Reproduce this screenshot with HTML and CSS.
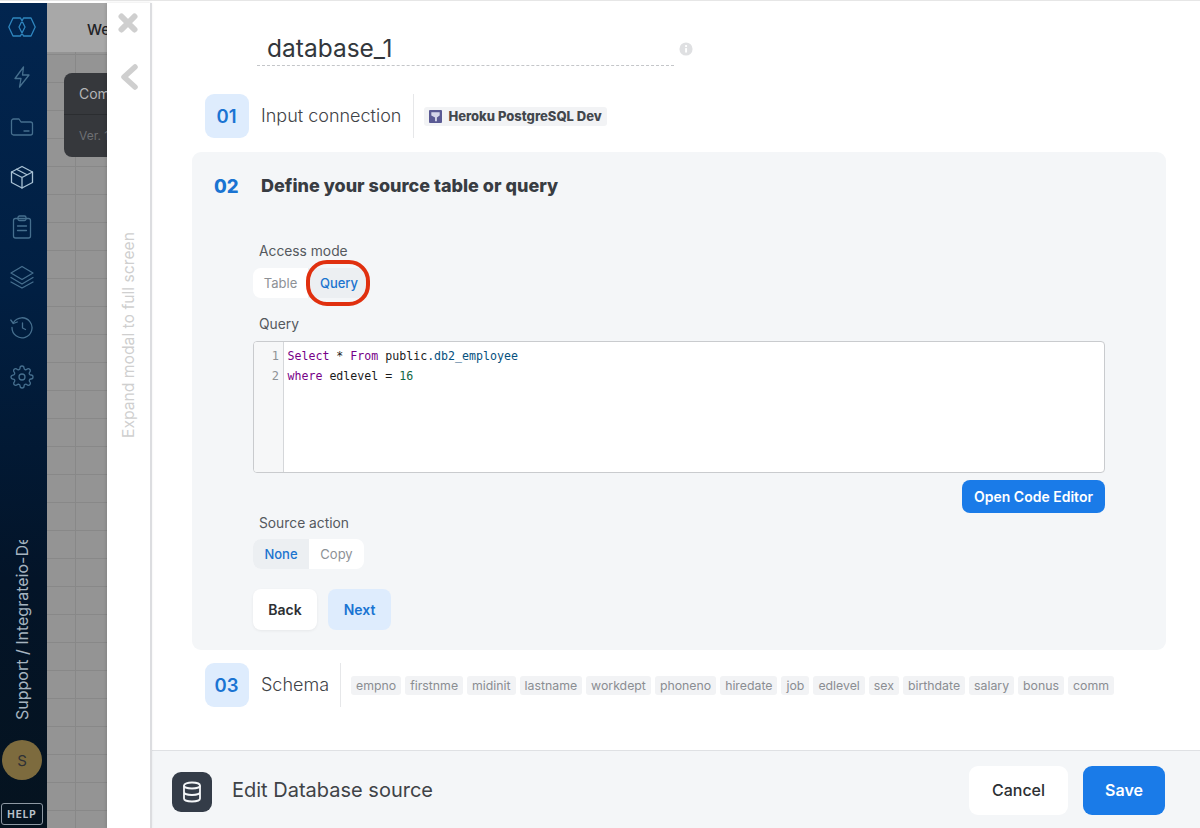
FILE: index.html
```html
<!DOCTYPE html>
<html lang="en">
<head>
<meta charset="utf-8">
<title>Edit Database source</title>
<link rel="stylesheet" href="styles.css">
</head>
<body>
<div class="app">
  <nav class="sidebar">
    <div class="nav-icons">
      <svg class="nav-icon logo" viewBox="0 0 28 20"><path d="M5 1h7.500l4.500 9-4.500 9H5L.8 10zM15.500 1H23l4.200 9-4.200 9h-7.500L11 10z"/></svg>
      <svg class="nav-icon" viewBox="0 0 24 24"><path d="M13.500 2 5 13.500h6L9.500 22 19 10h-6.500z"/></svg>
      <svg class="nav-icon" viewBox="0 0 24 24"><path d="M1.500 6a2 2 0 0 1 2-2h5.500l2 3h9.500a2 2 0 0 1 2 2v9a2 2 0 0 1-2 2h-17a2 2 0 0 1-2-2z"/><path d="M14 16h5"/></svg>
      <svg class="nav-icon bright" viewBox="0 0 24 24"><path d="M12 1.500 22.500 7v10.500L12 23 1.500 17.500V7z"/><path d="M1.500 7 12 12.500 22.500 7M12 12.500V23M6.500 4.200l10.500 5.600"/></svg>
      <svg class="nav-icon" viewBox="0 0 24 24"><rect x="3.500" y="3.500" width="17" height="19.500" rx="2"/><rect x="8" y="1" width="8" height="4.500" rx="1.500"/><path d="M7.500 11h9M7.500 15.500h9"/></svg>
      <svg class="nav-icon" viewBox="0 0 24 24"><path d="M12 1.500 23 8l-11 6.500L1 8z"/><path d="M1 12.500l11 6.500 11-6.500M1 17l11 6 11-6"/></svg>
      <svg class="nav-icon" viewBox="0 0 24 24"><path d="M3.500 7.500A10 10 0 1 1 2 12.500"/><path d="M.8 5l2.500 3.500 4-1.500M12.500 8v5l3 1.500"/></svg>
      <svg class="nav-icon" viewBox="0 0 24 24"><circle cx="12" cy="12" r="3"/><path d="M19.400 15a1.650 1.650 0 0 0 .33 1.820l.06.06a2 2 0 0 1 0 2.830 2 2 0 0 1-2.830 0l-.06-.06a1.650 1.650 0 0 0-1.820-.33 1.650 1.650 0 0 0-1 1.510V21a2 2 0 0 1-2 2 2 2 0 0 1-2-2v-.09A1.650 1.650 0 0 0 9 19.400a1.650 1.650 0 0 0-1.820.33l-.06.06a2 2 0 0 1-2.830 0 2 2 0 0 1 0-2.830l.06-.06a1.650 1.650 0 0 0 .33-1.820 1.650 1.650 0 0 0-1.510-1H3a2 2 0 0 1-2-2 2 2 0 0 1 2-2h.09A1.650 1.650 0 0 0 4.600 9a1.650 1.650 0 0 0-.33-1.820l-.06-.06a2 2 0 0 1 0-2.830 2 2 0 0 1 2.830 0l.06.06a1.650 1.650 0 0 0 1.820.33H9a1.650 1.650 0 0 0 1-1.510V3a2 2 0 0 1 2-2 2 2 0 0 1 2 2v.09a1.650 1.650 0 0 0 1 1.510 1.650 1.650 0 0 0 1.820-.33l.06-.06a2 2 0 0 1 2.830 0 2 2 0 0 1 0 2.830l-.06.06a1.650 1.650 0 0 0-.33 1.820V9a1.650 1.650 0 0 0 1.510 1H21a2 2 0 0 1 2 2 2 2 0 0 1-2 2h-.09a1.650 1.650 0 0 0-1.510 1z"/></svg>
    </div>
    <div class="org-name">Support / Integrateio-De</div>
    <div class="avatar">S</div>
    <div class="help">HELP</div>
  </nav>

  <div class="canvas">
    <div class="canvas-bar"><span class="canvas-bar-text">Welcome</span></div>
    <div class="canvas-card">
      <div class="canvas-card-head">Component</div>
      <div class="canvas-card-foot">Ver. 1</div>
    </div>
  </div>

  <aside class="modal-strip">
    <svg class="strip-close" viewBox="0 0 20 20"><path d="M3.500 3.500 16.500 16.500M16.500 3.500 3.500 16.500"/></svg>
    <svg class="strip-back" viewBox="0 0 20 26"><path d="M16 3 5 13l11 10"/></svg>
    <div class="strip-text">Expand modal to full screen</div>
  </aside>

  <main class="modal">
    <div class="modal-body">
      <div class="title-row">
        <div class="title-input">database_1</div>
        <svg class="info-icon" viewBox="0 0 16 16"><circle cx="8" cy="8" r="7.500" class="info-bg"/><rect x="7" y="7" width="2.200" height="5" class="info-fg"/><rect x="7" y="3.500" width="2.200" height="2.200" class="info-fg"/></svg>
      </div>

      <section class="step">
        <div class="step-num">01</div>
        <div class="step-label">Input connection</div>
        <div class="step-divider step-divider-first"></div>
        <div class="conn-chip">
          <svg class="conn-icon" viewBox="0 0 14 14"><rect width="14" height="14" rx="1" class="conn-bg"/><path d="M2.500 2.500h9v3.500L8.500 8v4H6.500V8L2.500 6z" class="conn-fg"/></svg>
          <span>Heroku PostgreSQL Dev</span>
        </div>
      </section>

      <section class="panel">
        <div class="panel-head">
          <span class="panel-num">02</span>
          <span class="panel-title">Define your source table or query</span>
        </div>
        <div class="panel-content">
          <div class="field-label access-label">Access mode</div>
          <div class="toggle">
            <span class="toggle-opt toggle-table">Table</span>
            <span class="toggle-opt toggle-query is-active">Query<span class="highlight-ring"></span></span>
          </div>
          <div class="field-label query-label">Query</div>
          <div class="editor">
            <div class="gutter"><div>1</div><div>2</div></div>
            <div class="code">
              <div class="code-line"><span class="kw">Select</span> * <span class="kw">From</span> public<span class="prop">.db2_employee</span></div>
              <div class="code-line"><span class="kw">where</span> edlevel = <span class="num">16</span></div>
            </div>
          </div>
          <div class="editor-actions"><button class="btn-code">Open Code Editor</button></div>
          <div class="field-label source-label">Source action</div>
          <div class="toggle">
            <span class="toggle-opt toggle-none is-active">None</span>
            <span class="toggle-opt toggle-copy">Copy</span>
          </div>
          <div class="panel-actions">
            <button class="btn btn-back">Back</button>
            <button class="btn btn-next">Next</button>
          </div>
        </div>
      </section>

      <section class="step step-schema">
        <div class="step-num">03</div>
        <div class="step-label">Schema</div>
        <div class="step-divider step-divider-schema"></div>
        <div class="chips">
          <span class="chip">empno</span><span class="chip">firstnme</span><span class="chip">midinit</span><span class="chip">lastname</span><span class="chip">workdept</span><span class="chip">phoneno</span><span class="chip">hiredate</span><span class="chip">job</span><span class="chip">edlevel</span><span class="chip">sex</span><span class="chip">birthdate</span><span class="chip">salary</span><span class="chip">bonus</span><span class="chip">comm</span>
        </div>
      </section>
    </div>

    <footer class="modal-footer">
      <div class="footer-icon">
        <svg viewBox="0 0 24 24"><ellipse cx="12" cy="5.500" rx="8" ry="3"/><path d="M4 5.500v13c0 1.700 3.600 3 8 3s8-1.300 8-3v-13M4 12c0 1.700 3.600 3 8 3s8-1.300 8-3"/></svg>
      </div>
      <div class="footer-title">Edit Database source</div>
      <button class="btn-footer btn-cancel">Cancel</button>
      <button class="btn-footer btn-save">Save</button>
    </footer>
  </main>
</div>
</body>
</html>
```
FILE: styles.css
```css
* { box-sizing: border-box; }
html, body { margin: 0; height: 100%; overflow: hidden; background: #fff; }
body { font-family: Inter, "Liberation Sans", sans-serif; color: #3b3f45; }
button { font-family: inherit; border: 0; cursor: pointer; padding: 0; }

.app { display: flex; width: 1200px; height: 828px; padding-top: 2px; border-top: 1px solid #e6e6e6; }

/* Sidebar */
.sidebar { width: 47px; flex: none; display: flex; flex-direction: column; align-items: center; padding-right: 3px; background: linear-gradient(180deg, #02254f 0%, #011f42 35%, #031428 70%, #05131f 100%); }
.nav-icons { display: flex; flex-direction: column; align-items: center; gap: 26px; padding-top: 12px; }
.nav-icon { width: 24px; height: 24px; fill: none; stroke: #466f8e; stroke-width: 1.300; stroke-linejoin: round; stroke-linecap: round; }
.nav-icon.logo { width: 28px; stroke: #2f86bf; }
.nav-icon.bright { stroke: #a9c2d4; }
.org-name { margin-top: auto; writing-mode: vertical-rl; transform: rotate(180deg); height: 180px; font-size: 16px; line-height: 20px; color: #a6b4c0; white-space: nowrap; overflow: hidden; }
.avatar { width: 40px; height: 40px; margin-top: 20px; border-radius: 50%; background: #7d6b3e; color: #2f3136; font-size: 15px; display: flex; align-items: center; justify-content: center; }
.help { width: 42px; height: 22px; margin: 23px 0 3px; border: 1px solid #8d98a3; border-radius: 3px; color: #b9c2ca; font-size: 10px; font-weight: 700; letter-spacing: 1px; display: flex; align-items: center; justify-content: center; }

/* Dimmed canvas */
.canvas { position: relative; width: 60px; flex: none; overflow: hidden; background-color: #949494; background-image: linear-gradient(#888 1px, transparent 1px), linear-gradient(90deg, #888 1px, transparent 1px); background-size: 28px 28px, 56px 28px; background-position: 0 23px, 28px 0; }
.canvas-bar { height: 49px; padding: 16px 0 0 40px; background: #a8a8a8; overflow: hidden; }
.canvas-bar-text { font-size: 15px; font-weight: 500; color: #1f2226; white-space: nowrap; }
.canvas-card { position: absolute; left: 17px; top: 70px; width: 120px; height: 84px; border-radius: 8px; background: #36383c; }
.canvas-card-head { height: 42px; padding: 12px 15px; font-size: 14px; color: #b4b5b7; border-bottom: 1px solid #2b2d30; white-space: nowrap; }
.canvas-card-foot { padding: 13px 15px; font-size: 12px; color: #6d6f73; }

/* Modal strip */
.modal-strip { position: relative; width: 45px; flex: none; background: #fff; border-right: 2px solid #dcdde0; display: flex; flex-direction: column; align-items: center; box-shadow: -1px 0 3px rgba(0, 0, 0, .12); }
.strip-close { width: 20px; height: 20px; margin-top: 10px; margin-right: 1px; fill: none; stroke: #cfcfcf; stroke-width: 6; stroke-linecap: round; }
.strip-back { width: 20px; height: 26px; margin-top: 31px; fill: none; stroke: #cfcfcf; stroke-width: 5.500; stroke-linecap: round; stroke-linejoin: round; }
.strip-text { margin-top: 142px; height: 206px; writing-mode: vertical-rl; transform: rotate(180deg); font-size: 15.700px; line-height: 18px; color: #cfcfcf; white-space: nowrap; }

/* Modal main */
.modal { flex: 1; min-width: 0; display: flex; flex-direction: column; background: #fff; }
.modal-body { flex: 1; min-height: 0; padding-left: 40px; }

.title-row { display: flex; align-items: flex-start; height: 91px; padding: 29px 0 0 65px; }
.title-input { width: 417px; height: 34px; padding: 0 0 0 10px; font-size: 24.500px; line-height: 32px; font-weight: 400; color: #33373c; border-bottom: 1px dashed #c4c6c9; }
.info-icon { width: 14px; height: 14px; margin: 10px 0 0 5px; }
.info-bg { fill: #dfe0e2; }
.info-fg { fill: #fff; }

.step { display: flex; align-items: center; height: 44px; padding-left: 13px; }
.step-num { width: 44px; height: 44px; flex: none; border-radius: 9px; background: #deecfd; color: #1a74d2; font-size: 18.500px; font-weight: 600; display: flex; align-items: center; justify-content: center; padding-right: 1px; }
.step-label { margin-left: 12px; font-size: 18px; line-height: 43px; height: 44px; font-weight: 300; color: #3f4347; white-space: nowrap; }
.step-divider { width: 1px; height: 44px; background: #e6e7e9; flex: none; }
.step-divider-first { margin-left: 12px; }
.conn-chip { display: flex; align-items: center; gap: 6px; height: 19px; margin-left: 10px; padding: 0 5px; border-radius: 3px; background: #f2f3f5; font-size: 13px; font-weight: 800; color: #43474d; white-space: nowrap; }
.conn-icon { width: 13px; height: 13px; }
.conn-bg { fill: #5a5a94; }
.conn-fg { fill: #d5d6ea; }

.panel { margin-top: 14px; width: 974px; height: 498px; border-radius: 9px; background: #f4f6f8; }
.panel-head { display: flex; align-items: center; height: 67px; padding-left: 22px; }
.panel-num { width: 47px; font-size: 18.500px; font-weight: 800; color: #1a74d2; }
.panel-title { font-size: 18px; font-weight: 800; color: #383c42; }
.panel-content { padding: 24px 61px 0; }

.field-label { font-size: 13.800px; line-height: 17px; color: #55595e; padding-left: 6px; white-space: nowrap; }
.toggle { display: inline-flex; vertical-align: top; height: 30px; border-radius: 8px; background: #fff; font-size: 13px; }
.toggle-opt { position: relative; display: flex; align-items: center; justify-content: center; color: #8d9196; }
.toggle-opt.is-active { background: #eceff2; color: #1b74cf; font-weight: 500; }
.toggle-table { width: 55px; }
.toggle-query { width: 60px; padding-left: 2px; border-radius: 0 8px 8px 0; }
.toggle-none { width: 56px; border-radius: 8px 0 0 8px; }
.toggle-copy { width: 55px; }
.access-label { height: 25px; }
.highlight-ring { position: absolute; left: -2px; top: -8px; width: 64px; height: 46px; border: 4.500px solid #e0300f; border-radius: 21px; }
.query-label { margin-top: 18px; height: 25px; }
.source-label { margin-top: 2px; height: 24px; }

.editor { display: flex; width: 852px; height: 132px; border: 1px solid #c9cbce; border-radius: 4px; background: #fff; font-family: "DejaVu Sans Mono", monospace; font-size: 12px; line-height: 20px; overflow: hidden; }
.gutter { width: 30px; flex: none; padding: 4px 4px 0 0; background: #f6f7f8; border-right: 1px solid #d5d7da; color: #8f9296; text-align: right; }
.code { padding: 4px 0 0 3.500px; color: #1a1a1a; font-size: 11.600px; }
.code-line { white-space: pre; }
.kw { color: #770088; }
.prop { color: #05507e; }
.num { color: #116644; }

.editor-actions { display: flex; justify-content: flex-end; width: 852px; margin-top: 7px; height: 33px; }
.btn-code { width: 143px; height: 33px; border-radius: 8px; background: #1a7be8; color: #fff; font-size: 14px; font-weight: 600; }
.panel-actions { display: flex; gap: 11px; margin-top: 20px; }
.btn { height: 41px; border-radius: 8px; font-size: 14px; font-weight: 600; }
.btn-back { width: 64px; background: #fff; color: #2c2f33; box-shadow: 0 1px 3px rgba(0, 0, 0, .06); }
.btn-next { width: 63px; background: #deecfd; color: #1a74d2; }

.step-schema { margin-top: 13px; }
.step-divider-schema { margin-left: 11px; }
.chips { display: flex; gap: 4px; margin-left: 10px; }
.chip { height: 19px; padding: 0 5px; border-radius: 3px; background: #f2f3f5; color: #8a8d92; font-size: 12.300px; line-height: 19px; white-space: nowrap; }

.modal-footer { display: flex; align-items: center; height: 78px; flex: none; padding: 2px 35px 0 20px; border-top: 1px solid #dfe1e4; background: #f4f6f8; }
.footer-icon { width: 40px; height: 40px; margin-top: 2px; border-radius: 9px; background: #343c48; display: flex; align-items: center; justify-content: center; }
.footer-icon svg { width: 24px; height: 24px; fill: none; stroke: #f4f6f8; stroke-width: 1.800; }
.footer-title { margin-left: 20px; margin-top: -2px; font-size: 20px; color: #3f4347; white-space: nowrap; }
.btn-footer { height: 49px; padding-bottom: 2px; border-radius: 9px; font-size: 16px; font-weight: 500; }
.btn-cancel { width: 99px; margin-left: auto; background: #fff; color: #2c2f33; }
.btn-save { width: 82px; margin-left: 15px; background: #1a7be8; color: #fff; font-weight: 600; }
```
